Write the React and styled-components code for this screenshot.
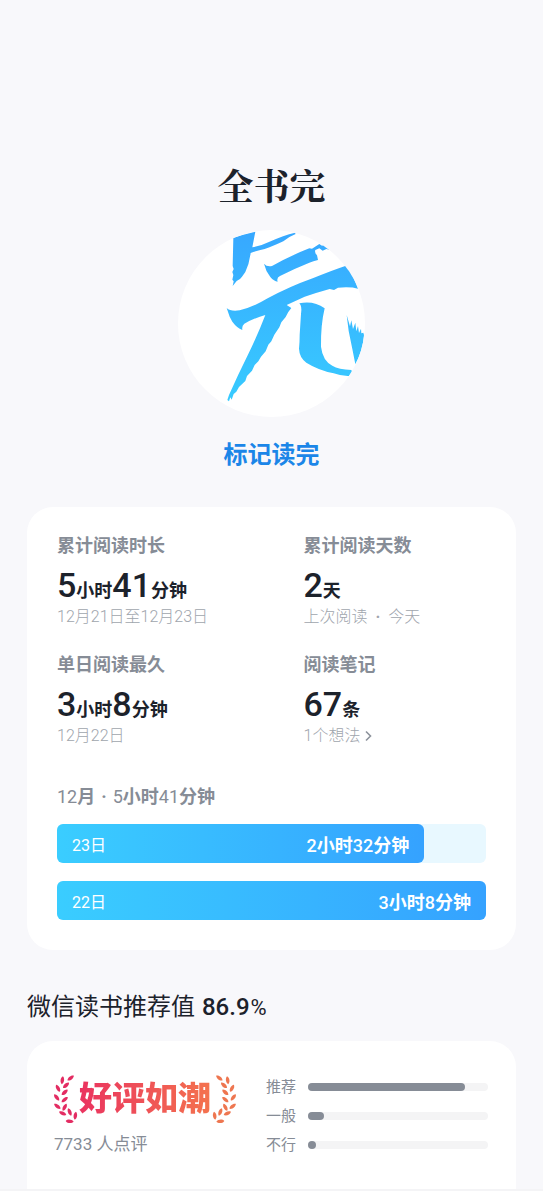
import React from "react";
import styled, { createGlobalStyle } from "styled-components";

const GlobalStyle = createGlobalStyle`
  * { box-sizing: border-box; }
  body {
    margin: 0;
    background: #fff;
    color: #1c222b;
    font-family: Roboto, "Noto Sans CJK SC", sans-serif;
  }
  h1, h2, h3, p, dl, dt, dd, ul { margin: 0; padding: 0; }
  ul { list-style: none; }
`;

const Page = styled.main`
  background: #f8f8fb;
  padding: 159px 27px 0;
  border-bottom: 2px solid #f4f4f6;
`;

const Finish = styled.header`
  display: flex;
  flex-direction: column;
  align-items: center;
`;

const Title = styled.h1`
  font-family: "Noto Serif CJK SC", "Noto Serif SC", "Noto Sans CJK SC", serif;
  font-size: 36px;
  line-height: 52px;
  font-weight: 700;
`;

const MarkButton = styled.button`
  display: flex;
  flex-direction: column;
  align-items: center;
  gap: 20px;
  margin-top: 19px;
  padding: 0;
  border: 0;
  background: none;
  color: #1b86e8;
  font-family: inherit;
  font-size: 24px;
  line-height: 36px;
  font-weight: 700;
  cursor: pointer;
`;

const Seal = styled.svg`
  display: block;
  width: 187px;
  height: 187px;
  border-radius: 50%;
  background: #fff;
`;

const Card = styled.section`
  background: #fff;
  border-radius: 26px;
  padding: 26px 30px 30px;
  margin-top: 34px;
`;

const Stats = styled.dl`
  display: grid;
  grid-template-columns: 1fr 1fr;
  column-gap: 64px;
  row-gap: 23px;
`;

const StatLabel = styled.dt`
  font-size: 18px;
  line-height: 26px;
  font-weight: 700;
  color: #868c96;
`;

const StatValue = styled.dd`
  height: 46px;
  font-size: 18px;
  line-height: 52px;
  font-weight: 700;
  white-space: nowrap;
`;

const Digits = styled.span`
  font-size: 34px;
  font-weight: 500;
`;

const StatNote = styled.dd`
  font-size: 16px;
  line-height: 24px;
  font-weight: 300;
  color: #a0a5ad;
  white-space: nowrap;
`;

const Dot = styled.span`
  margin: 0 ${({ $gap }) => $gap}px;
  font-weight: 700;
`;

const NoteLink = styled.a`
  display: inline-flex;
  align-items: center;
  gap: 5px;
  color: inherit;
  text-decoration: none;
`;

const MonthTitle = styled.h2`
  margin-top: 36px;
  font-size: 18px;
  line-height: 26px;
  font-weight: 700;
  color: #868c96;
`;

const Count = styled.span`
  font-weight: ${({ $weight }) => $weight};
`;

const Days = styled.ul`
  display: grid;
  gap: 18px;
  margin-top: 14px;
`;

const DayTrack = styled.li`
  background: #e8f8ff;
  border-radius: 6px;
`;

const DayFill = styled.div`
  display: flex;
  align-items: center;
  justify-content: space-between;
  height: 39px;
  padding: 0 15px;
  border-radius: 6px;
  background: linear-gradient(90deg, #3acdff, #35a2ff);
  color: #fff;
  font-size: 16px;
`;

const DayTime = styled.strong`
  font-size: 18px;
  font-weight: 700;
`;

const ScoreTitle = styled.h2`
  margin-top: 38px;
  font-size: 24px;
  line-height: 38px;
  font-weight: 400;
`;

const Score = styled.span`
  margin: 0 1px;
  font-weight: 500;
`;

const Percent = styled.span`
  font-size: 22px;
`;

const ReviewCard = styled.section`
  display: grid;
  grid-template-columns: auto 1fr;
  align-items: start;
  column-gap: 30px;
  margin-top: 14px;
  padding: 33px 28px 32px 27px;
  background: #fff;
  border-radius: 26px 26px 0 0;
`;

const Badge = styled.div`
  display: flex;
  align-items: center;
  justify-content: space-between;
  width: 182px;
  height: 50px;
`;

const BadgeText = styled.strong`
  font-size: 33px;
  line-height: 50px;
  font-weight: 900;
  white-space: nowrap;
  color: transparent;
  background: linear-gradient(90deg, #ea3360, #f4734e);
  background-clip: text;
  -webkit-background-clip: text;
`;

const Laurel = styled.svg`
  flex: none;
  width: 24px;
  height: 50px;
`;

const ReviewCount = styled.p`
  margin-top: 7px;
  font-size: 17px;
  line-height: 26px;
  color: #868c96;
`;

const Votes = styled.ul`
  display: grid;
  row-gap: 5px;
  padding-top: 1px;
`;

const Vote = styled.li`
  display: flex;
  align-items: center;
  gap: 12px;
  font-size: 15px;
  line-height: 24px;
  color: #868c96;
`;

const VoteTrack = styled.div`
  flex: 1;
  height: 8px;
  border-radius: 4px;
  background: #f4f4f5;
`;

const VoteFill = styled.div`
  min-width: 8px;
  height: 8px;
  border-radius: 4px;
  background: #868c96;
`;

const stats = [
  { label: "累计阅读时长", value: [["5", "小时"], ["41", "分钟"]], note: "12月21日至12月23日" },
  { label: "累计阅读天数", value: [["2", "天"]], note: <>上次阅读<Dot $gap={8}>·</Dot>今天</> },
  { label: "单日阅读最久", value: [["3", "小时"], ["8", "分钟"]], note: "12月22日" },
  { label: "阅读笔记", value: [["67", "条"]], note: "1个想法", link: true },
];

const days = [
  { day: "23日", time: [["2", "小时"], ["32", "分钟"]], share: 85.6 },
  { day: "22日", time: [["3", "小时"], ["8", "分钟"]], share: 100 },
];

const votes = [
  { label: "推荐", share: 87 },
  { label: "一般", share: 9 },
  { label: "不行", share: 4 },
];

const leaves = [
  [68, 27, -38], [43, 34, 98], [54, 49, -42], [30, 58, 62], [50, 70, -42],
  [26, 85, 52], [50, 92, -40], [28, 112, 38], [50, 115, -62], [44, 133, 25],
  [65, 129, 68], [82, 140, 98], [65, 157, 6],
];

function Duration({ parts, weight }) {
  return parts.map(([n, unit]) => (
    <React.Fragment key={unit}>
      <Count $weight={weight}>{n}</Count>
      {unit}
    </React.Fragment>
  ));
}

function LaurelBranch({ id, from, to, flip }) {
  return (
    <Laurel viewBox="18 15 72 150" aria-hidden="true">
      <defs>
        <linearGradient id={id} gradientUnits="userSpaceOnUse" x1="18" y1="0" x2="90" y2="0">
          <stop stopColor={from} />
          <stop offset="1" stopColor={to} />
        </linearGradient>
      </defs>
      <g fill={`url(#${id})`} transform={flip ? "translate(108 0) scale(-1 1)" : undefined}>
        {leaves.map(([x, y, r]) => (
          <path
            key={`${x}-${y}`}
            d="M-12 0C-7-7 7-7 12 0C7 7-7 7-12 0Z"
            transform={`translate(${x} ${y}) rotate(${r})`}
          />
        ))}
      </g>
    </Laurel>
  );
}

function BrushSeal() {
  return (
    <Seal viewBox="-126 15 561 561" aria-hidden="true">
      <defs>
        <linearGradient id="brush" gradientUnits="userSpaceOnUse" x1="0" y1="20" x2="0" y2="530">
          <stop stopColor="#37a8ff" />
          <stop offset="1" stopColor="#38cbff" />
        </linearGradient>
      </defs>
      <g fill="url(#brush)">
        <path d="M40 39Q70 28 106 20L97 67Q128 61 152 49Q190 31 225 23L227 27Q204 36 190 49Q158 64 134 72Q114 76 92 84Q88 116 76 141L66 155L60 162L50 168L38 183L41 169L37 164L40 150L37 141L41 132L38 123Z" />
        <path d="M132 116Q140 126 156 123Q207 94 268 70L276 71L298 57L306 62L313 59L328 74L319 72L308 77L298 70L286 75Q283 84 291 91L294 105Q280 108 268 113Q225 130 180 153Q169 158 173 170Q162 169 151 156Q137 138 132 116Z" />
        <path d="M20 249Q31 260 59 256Q100 246 143 220Q207 185 280 159Q333 137 378 122Q401 151 414 191Q393 185 354 188L342 195L329 192Q293 202 254 215L200 240L214 249Q204 260 197 276L184 292L178 307L163 329L154 349L145 359L137 379L123 395L115 409L104 420L96 437L81 453L76 468L57 486L49 500L41 507L35 524L31 517L27 529L22 525L27 510Q54 449 82 393Q113 330 136 270Q108 277 73 296Q65 302 67 315Q51 309 37 290L29 275Z" />
        <path d="M238 235Q281 226 314 250Q302 300 303 365Q308 407 337 422Q356 433 394 435L396 440L387 453Q366 454 341 445Q294 435 259 413Q238 397 237 371Q239 351 239 329L243 267Q247 244 238 235Z" />
        <path d="M380 270L390 304L394 286L399 312L406 293L409 319L414 303L417 324L423 311L424 325L430 323L432 330Q428 378 406 418L397 372L386 318Z" />
      </g>
    </Seal>
  );
}

export default function App() {
  return (
    <>
      <GlobalStyle />
      <Page lang="zh-CN">
        <Finish>
          <Title>全书完</Title>
          <MarkButton type="button">
            <BrushSeal />
            标记读完
          </MarkButton>
        </Finish>

        <Card>
          <Stats>
            {stats.map(({ label, value, note, link }) => (
              <div key={label}>
                <StatLabel>{label}</StatLabel>
                <StatValue>
                  {value.map(([n, unit]) => (
                    <React.Fragment key={unit}>
                      <Digits>{n}</Digits>
                      {unit}
                    </React.Fragment>
                  ))}
                </StatValue>
                <StatNote>
                  {link ? (
                    <NoteLink href="#notes">
                      {note}
                      <svg width="7" height="12" viewBox="0 0 7 12" fill="none" stroke="#8d939c" strokeWidth="1.6" aria-hidden="true">
                        <path d="M1 1.5L5.5 6L1 10.5" />
                      </svg>
                    </NoteLink>
                  ) : (
                    note
                  )}
                </StatNote>
              </div>
            ))}
          </Stats>

          <MonthTitle>
            <Count $weight={400}>12</Count>月<Dot $gap={6}>·</Dot>
            <Duration parts={[["5", "小时"], ["41", "分钟"]]} weight={400} />
          </MonthTitle>
          <Days>
            {days.map(({ day, time, share }) => (
              <DayTrack key={day}>
                <DayFill style={{ width: `${share}%` }}>
                  <span>{day}</span>
                  <DayTime>
                    <Duration parts={time} weight={500} />
                  </DayTime>
                </DayFill>
              </DayTrack>
            ))}
          </Days>
        </Card>

        <ScoreTitle>
          微信读书推荐值 <Score>86.9</Score>
          <Percent>%</Percent>
        </ScoreTitle>
        <ReviewCard>
          <div>
            <Badge>
              <LaurelBranch id="laurel-left" from="#e32c62" to="#ea3360" />
              <BadgeText>好评如潮</BadgeText>
              <LaurelBranch id="laurel-right" from="#ee7650" to="#f0684f" flip />
            </Badge>
            <ReviewCount>7733 人点评</ReviewCount>
          </div>
          <Votes>
            {votes.map(({ label, share }) => (
              <Vote key={label}>
                {label}
                <VoteTrack>
                  <VoteFill style={{ width: `${share}%` }} />
                </VoteTrack>
              </Vote>
            ))}
          </Votes>
        </ReviewCard>
      </Page>
    </>
  );
}
